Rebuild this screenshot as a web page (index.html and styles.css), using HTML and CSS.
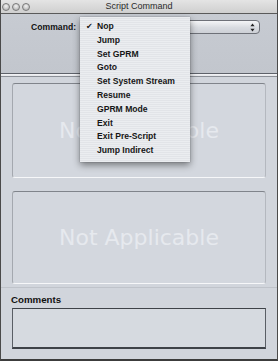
FILE: index.html
```html
<!DOCTYPE html>
<html>
<head>
<meta charset="utf-8">
<link rel="stylesheet" href="styles.css">
</head>
<body>
<div class="window">
  <div class="titlebar">
    <div class="lights">
      <span class="light"></span><span class="light"></span><span class="light"></span>
    </div>
    <div class="title">Script Command</div>
    <div></div>
  </div>
  <div class="toolbar">
    <div class="row">
      <span class="label">Command:</span>
      <div class="popup">
        <svg class="arrows" width="5" height="9" viewBox="0 0 5 9"><path d="M2.5 0.5 L4.6 3.3 L0.4 3.3 Z M2.5 8.5 L4.6 5.7 L0.4 5.7 Z" fill="#222"/></svg>
      </div>
    </div>
  </div>
  <div class="sep"></div>
  <div class="main">
    <div class="panel p1"><span class="na">Not Applicable</span></div>
    <div class="panel p2"><span class="na">Not Applicable</span></div>
  </div>
  <div class="comments">
    <div class="clabel">Comments</div>
    <div class="cbox"></div>
  </div>
  <div class="menu">
    <div class="item"><span class="check">✔</span>Nop</div>
    <div class="item"><span class="check"></span>Jump</div>
    <div class="item"><span class="check"></span>Set GPRM</div>
    <div class="item"><span class="check"></span>Goto</div>
    <div class="item"><span class="check"></span>Set System Stream</div>
    <div class="item"><span class="check"></span>Resume</div>
    <div class="item"><span class="check"></span>GPRM Mode</div>
    <div class="item"><span class="check"></span>Exit</div>
    <div class="item"><span class="check"></span>Exit Pre-Script</div>
    <div class="item"><span class="check"></span>Jump Indirect</div>
  </div>
</div>
</body>
</html>
```

FILE: styles.css
```css
* { box-sizing: border-box; }
html, body { margin: 0; padding: 0; background: #2a2a2a; }
body { font-family: "Liberation Sans", Arial, sans-serif; }

.window {
  position: relative;
  width: 278px;
  height: 361px;
  display: flex;
  flex-direction: column;
  background: #d1d5dc;
  border-left: 1px solid #4a4a4a;
  border-right: 1px solid #4a4a4a;
  border-bottom: 2px solid #3c3c3c;
  overflow: hidden;
}

.titlebar {
  height: 14px;
  flex: none;
  display: grid;
  grid-template-columns: 1fr auto 1fr;
  align-items: center;
  background: linear-gradient(#e4e4e4, #cfcfcf);
  border-bottom: 1px solid #5a5a5a;
}
.lights { display: flex; gap: 2px; padding-left: 1px; align-items: center; }
.light {
  width: 8px; height: 8px; border-radius: 50%;
  background: radial-gradient(circle at 50% 35%, #f2f2f2, #a8a8a8);
  border: 1px solid #7a7a7a;
}
.title {
  font-size: 9px;
  color: #2a2a2a;
  line-height: 13px;
}

.toolbar {
  height: 59px;
  flex: none;
  background: linear-gradient(#c7cbd2, #c2c6cd);
  padding-top: 6px;
}
.row { display: flex; align-items: center; height: 14px; }
.label {
  width: 79px;
  padding-right: 4px;
  text-align: right;
  font-weight: bold;
  font-size: 8.6px;
  color: #111;
}
.popup {
  width: 180px;
  height: 14px;
  border: 1px solid #6e7178;
  border-radius: 4px;
  background: linear-gradient(#f4f5f7, #d8dbe0 55%, #cdd0d6);
  display: flex;
  justify-content: flex-end;
  align-items: center;
  padding-right: 4px;
}
.arrows { display: block; }

.sep {
  height: 4px;
  flex: none;
  border-top: 1px solid #5e626a;
  border-bottom: 1px solid #8c9097;
  background: linear-gradient(#f4f5f7, #e2e4e8);
}

.main {
  flex: none;
  display: flex;
  flex-direction: column;
  gap: 13px;
  padding: 6px 11px 0 11px;
}
.panel {
  display: flex;
  align-items: center;
  justify-content: center;
  background: #d3d7de;
  border-top: 1px solid #80848b;
  border-left: 1px solid #a4a8af;
  border-right: 1px solid #b4b8bf;
  border-bottom: 1px solid #f6f7f9;
  border-radius: 3px;
}
.p1 { height: 95px; }
.p2 { height: 93px; }
.na {
  font-family: "DejaVu Sans", sans-serif;
  font-size: 22px;
  color: #e6e9ee;
}

.comments {
  flex: 1;
  margin-top: 3px;
  border-top: 1px solid #bfc3ca;
  padding: 6px 11px 0 11px;
}
.clabel {
  font-weight: bold;
  font-size: 9.7px;
  color: #111;
  line-height: 12px;
  margin-left: -1px;
}
.cbox {
  margin-top: 2px;
  height: 41px;
  background: #d6dae0;
  border: 1px solid #5a5e65;
  border-top-color: #3e4248;
  border-bottom: 2px solid #3e4248;
}

.menu {
  position: absolute;
  left: 79px;
  top: 17px;
  width: 110px;
  height: 145px;
  padding-top: 3px;
  background: repeating-linear-gradient(#ebedf0 0 1px, #e2e4e8 1px 2px);
  box-shadow: 0 3px 7px rgba(0,0,0,0.45), 0 0 1px rgba(0,0,0,0.4);
}
.item {
  height: 13.8px;
  line-height: 13.8px;
  font-weight: bold;
  font-size: 8.6px;
  color: #161616;
  display: flex;
  white-space: nowrap;
}
.check {
  width: 17px;
  padding-left: 6px;
  font-family: "DejaVu Sans", sans-serif;
  font-size: 8px;
}
```
